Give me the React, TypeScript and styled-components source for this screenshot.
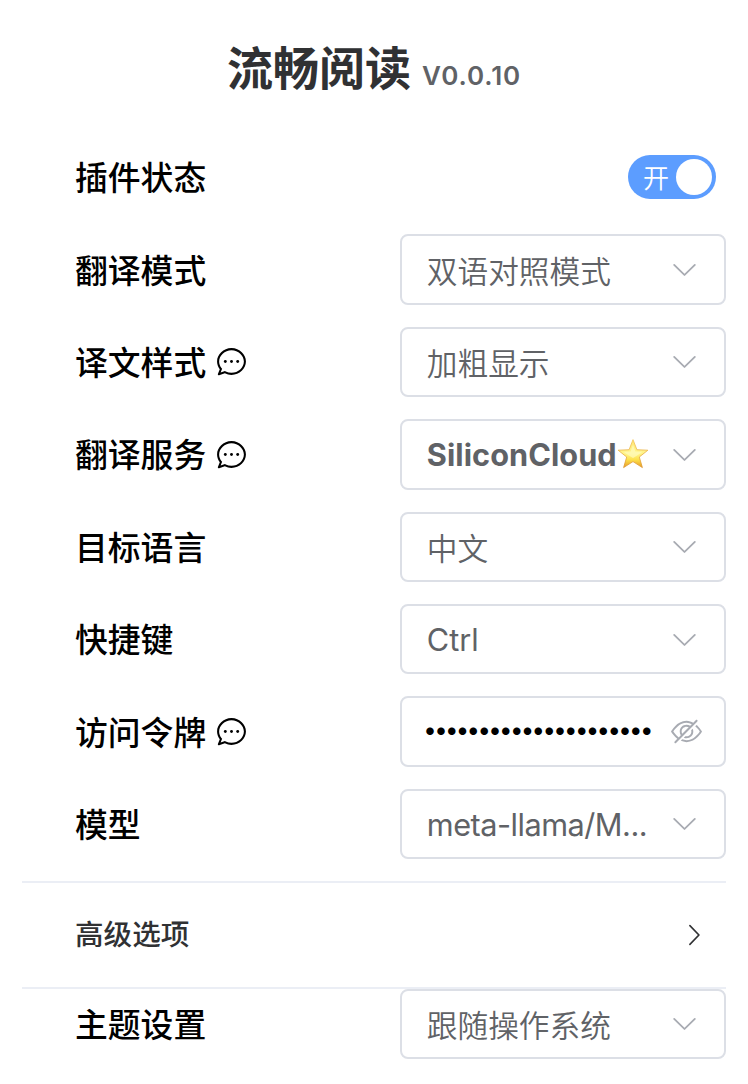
import React from "react";
import styled, { createGlobalStyle, css } from "styled-components";

const Global = createGlobalStyle`
  * { box-sizing: border-box; }
  body {
    margin: 0;
    background: #fff;
    font-family: Inter, "Noto Sans CJK SC", sans-serif;
  }
`;

const Popup = styled.main`
  width: 748px;
  height: 1084px;
  padding: 28px 22px 0;
  overflow: hidden;
  display: flex;
  flex-direction: column;
`;

const Header = styled.header`
  height: 80px;
  flex: none;
  display: flex;
  justify-content: center;
  align-items: baseline;
  gap: 11px;
  line-height: 80px;
  white-space: nowrap;
`;

const Title = styled.h1`
  margin: 0;
  font-size: 46px;
  font-weight: 700;
  color: #303133;
`;

const Version = styled.small`
  font-size: 26px;
  font-weight: 580;
  letter-spacing: 0.9px;
  color: #606266;
`;

const Rows = styled.section`
  flex: none;
  display: flex;
  flex-direction: column;
  gap: 22px;
  padding-top: 34px;
`;

const Row = styled.div`
  height: 70.4px;
  flex: none;
  display: flex;
  align-items: center;
  padding-left: 53px;
`;

const Label = styled.label`
  flex: 1;
  display: flex;
  align-items: center;
  gap: 9px;
  font-size: 32.8px;
  font-weight: 500;
  line-height: 48px;
  color: #000;
`;

const LabelText = styled.span`
  padding-top: 2px;
`;

const Box = styled.div<{ $secret?: boolean }>`
  width: 326px;
  height: 70.4px;
  flex: none;
  display: flex;
  align-items: center;
  justify-content: space-between;
  border: 2px solid #dcdfe6;
  border-radius: 8px;
  padding: ${(p) => (p.$secret ? "0 22px 0 21.3px" : "0 24px 0 24.8px")};
  color: #a8abb2;
`;

const Value = styled.span<{ $bold?: boolean; $tight?: boolean; $cjk?: boolean }>`
  display: flex;
  align-items: center;
  padding-top: ${(p) => (p.$cjk ? 5 : p.$tight ? 3 : 1.6)}px;
  font-size: 30.7px;
  font-weight: ${(p) => (p.$bold ? 700 : p.$cjk ? 350 : 400)};
  letter-spacing: ${(p) => (p.$tight ? "-0.5px" : p.$bold ? "0.05px" : "0")};
  line-height: 46px;
  color: #606266;
  white-space: nowrap;
`;

const Secret = styled.span`
  width: 229.3px;
  overflow: hidden;
  padding-bottom: 3px;
  font-size: 24px;
  letter-spacing: -2.67px;
  line-height: 46px;
  white-space: nowrap;
  color: #000;
`;

const Switch = styled.button`
  width: 88px;
  height: 44px;
  margin-right: 10px;
  border: 0;
  border-radius: 22px;
  padding: 0 4px 0 15px;
  display: flex;
  align-items: center;
  justify-content: space-between;
  background: #5c9dff;
  color: #fff;
  font: 350 26px/44px "Noto Sans CJK SC", sans-serif;
`;

const Knob = styled.span`
  width: 36px;
  height: 36px;
  border-radius: 50%;
  background: #fff;
`;

const Advanced = styled.div`
  height: 107.6px;
  flex: none;
  margin-top: 22px;
  border-top: 2px solid #ebeef5;
  border-bottom: 2px solid #ebeef5;
  padding: 0 18px 0 53px;
  display: flex;
  align-items: center;
  justify-content: space-between;
  font-size: 28.6px;
  font-weight: 500;
  line-height: 44px;
  color: #303133;
`;

const Icon = styled.svg<{ $size: number }>`
  flex: none;
  fill: currentColor;
  ${(p) => css`
    width: ${p.$size}px;
    height: ${p.$size}px;
  `}
`;

const Star = styled.svg`
  flex: none;
  width: 32px;
  height: 32px;
  margin-bottom: 2px;
`;

const ArrowDown = () => (
  <Icon $size={31} viewBox="0 0 1024 1024">
    <path d="M831.872 340.864 512 652.672 192.128 340.864a30.592 30.592 0 0 0-42.752 0 29.12 29.12 0 0 0 0 41.6L489.664 714.24a32 32 0 0 0 44.672 0l340.288-331.712a29.12 29.12 0 0 0 0-41.728 30.592 30.592 0 0 0-42.752 0z" />
  </Icon>
);

const ArrowRight = () => (
  <Icon $size={28} viewBox="0 0 1024 1024">
    <path d="M340.864 149.312a30.592 30.592 0 0 0 0 42.752L652.736 512 340.864 831.872a30.592 30.592 0 0 0 0 42.752 29.12 29.12 0 0 0 41.728 0L714.24 534.336a32 32 0 0 0 0-44.672L382.592 149.376a29.12 29.12 0 0 0-41.728 0z" />
  </Icon>
);

const Chat = () => (
  <Icon $size={33} viewBox="0 0 1024 1024">
    <path d="m174.72 855.68 135.296-45.12 23.68 11.84C388.096 849.536 448.576 864 512 864c211.84 0 384-166.784 384-352S723.84 160 512 160 128 326.784 128 512c0 69.12 24.96 139.264 70.848 199.232l22.08 28.8-46.272 115.584zm-45.248 82.56A32 32 0 0 1 89.6 896l58.368-145.92C94.72 680.32 64 596.864 64 512 64 299.904 256 96 512 96s448 203.904 448 416-192 416-448 416a461.056 461.056 0 0 1-206.912-48.384l-175.616 58.56z" />
    <circle cx="320" cy="512" r="45" />
    <circle cx="512" cy="512" r="45" />
    <circle cx="704" cy="512" r="45" />
  </Icon>
);

const Hide = () => (
  <Icon $size={31} viewBox="0 0 1024 1024">
    <path d="M876.8 156.8c0-9.6-3.2-16-9.6-22.4-6.4-6.4-12.8-9.6-22.4-9.6-9.6 0-16 3.2-22.4 9.6L736 220.8c-64-32-137.6-51.2-224-60.8-160 16-288 73.6-377.6 176C44.8 438.4 0 496 0 512s48 73.6 134.4 176c22.4 25.6 44.8 48 73.6 67.2l-86.4 89.6c-6.4 6.4-9.6 12.8-9.6 22.4 0 9.6 3.2 16 9.6 22.4 6.4 6.4 12.8 9.6 22.4 9.6 9.6 0 16-3.2 22.4-9.6l704-710.4c3.2-6.4 6.4-12.8 6.4-22.4Zm-646.4 528c-76.8-70.4-128-128-153.6-172.8 28.8-48 80-105.6 153.6-172.8C304 272 400 230.4 512 224c64 3.2 124.8 19.2 176 44.8l-54.4 54.4C598.4 300.8 560 288 512 288c-64 0-115.2 22.4-160 64s-64 96-64 160c0 48 12.8 89.6 35.2 124.8L256 707.2c-9.6-6.4-19.2-16-25.6-22.4Zm140.8-96c-12.8-22.4-19.2-48-19.2-76.8 0-44.8 16-83.2 48-112 32-28.8 67.2-48 112-48 28.8 0 54.4 6.4 73.6 19.2L371.2 588.8ZM889.599 336c-12.8-16-28.8-28.8-41.6-41.6l-48 48c73.6 67.2 124.8 124.8 150.4 169.6-28.8 48-80 105.6-153.6 172.8-73.6 67.2-172.8 108.8-284.8 115.2-51.2-3.2-99.2-12.8-140.8-28.8l-48 48c57.6 22.4 118.4 38.4 188.8 44.8 160-16 288-73.6 377.6-176C979.199 585.6 1024 528 1024 512s-48.001-73.6-134.401-176Z" />
    <path d="M511.998 672c-12.8 0-25.6-3.2-38.4-6.4l-51.2 51.2c28.8 12.8 57.6 19.2 89.6 19.2 64 0 115.2-22.4 160-64 41.6-41.6 64-96 64-160 0-32-6.4-64-19.2-89.6l-51.2 51.2c3.2 12.8 6.4 25.6 6.4 38.4 0 44.8-16 83.2-48 112-32 28.8-67.2 48-112 48Z" />
  </Icon>
);

const StarIcon = () => (
  <Star viewBox="0 0 32 32">
    <defs>
      <linearGradient id="starFace" x1="0" y1="0" x2="0" y2="1">
        <stop offset="0" stopColor="#ffe675" />
        <stop offset="0.5" stopColor="#fff58a" />
        <stop offset="0.72" stopColor="#fde04b" />
        <stop offset="1" stopColor="#e69a22" />
      </linearGradient>
      <linearGradient id="starEdge" x1="0" y1="0" x2="0" y2="1">
        <stop offset="0" stopColor="#f3c65a" />
        <stop offset="1" stopColor="#dc9430" />
      </linearGradient>
    </defs>
    <path
      d="M16 1.6 19.9 11.7 30.9 12.2 22.3 19 25.4 29.6 16 23.6 6.6 29.6 9.7 19 1.1 12.2 12.1 11.7Z"
      fill="url(#starFace)"
      stroke="url(#starEdge)"
      strokeWidth="0.8"
      strokeLinejoin="round"
    />
    <path d="M16 6.5 18.4 13.4 25.5 13.8 19.8 17.8 16 20 12.2 17.8 6.5 13.8 13.6 13.4Z" fill="#fffbc0" opacity="0.7" />
  </Star>
);

type FieldProps = {
  label: string;
  value: string;
  hint?: boolean;
  bold?: boolean;
  star?: boolean;
  tight?: boolean;
  cjk?: boolean;
};

const Field = ({ label, value, hint, bold, star, tight, cjk }: FieldProps) => (
  <Row>
    <Label>
      <LabelText>{label}</LabelText>
      {hint && <Chat />}
    </Label>
    <Box>
      <Value $bold={bold} $tight={tight} $cjk={cjk}>
        {value}
        {star && <StarIcon />}
      </Value>
      <ArrowDown />
    </Box>
  </Row>
);

export default function App() {
  return (
    <Popup>
      <Global />
      <Header>
        <Title>流畅阅读</Title>
        <Version>V0.0.10</Version>
      </Header>
      <Rows>
        <Row>
          <Label>
            <LabelText>插件状态</LabelText>
          </Label>
          <Switch>
            开
            <Knob />
          </Switch>
        </Row>
        <Field label="翻译模式" value="双语对照模式" cjk />
        <Field label="译文样式" value="加粗显示" hint cjk />
        <Field label="翻译服务" value="SiliconCloud" hint bold star />
        <Field label="目标语言" value="中文" cjk />
        <Field label="快捷键" value="Ctrl" />
        <Row>
          <Label>
            <LabelText>访问令牌</LabelText>
            <Chat />
          </Label>
          <Box $secret>
            <Secret>{"•".repeat(22)}</Secret>
            <Hide />
          </Box>
        </Row>
        <Field label="模型" value="meta-llama/M..." tight />
      </Rows>
      <Advanced>
        高级选项
        <ArrowRight />
      </Advanced>
      <Field label="主题设置" value="跟随操作系统" cjk />
    </Popup>
  );
}
